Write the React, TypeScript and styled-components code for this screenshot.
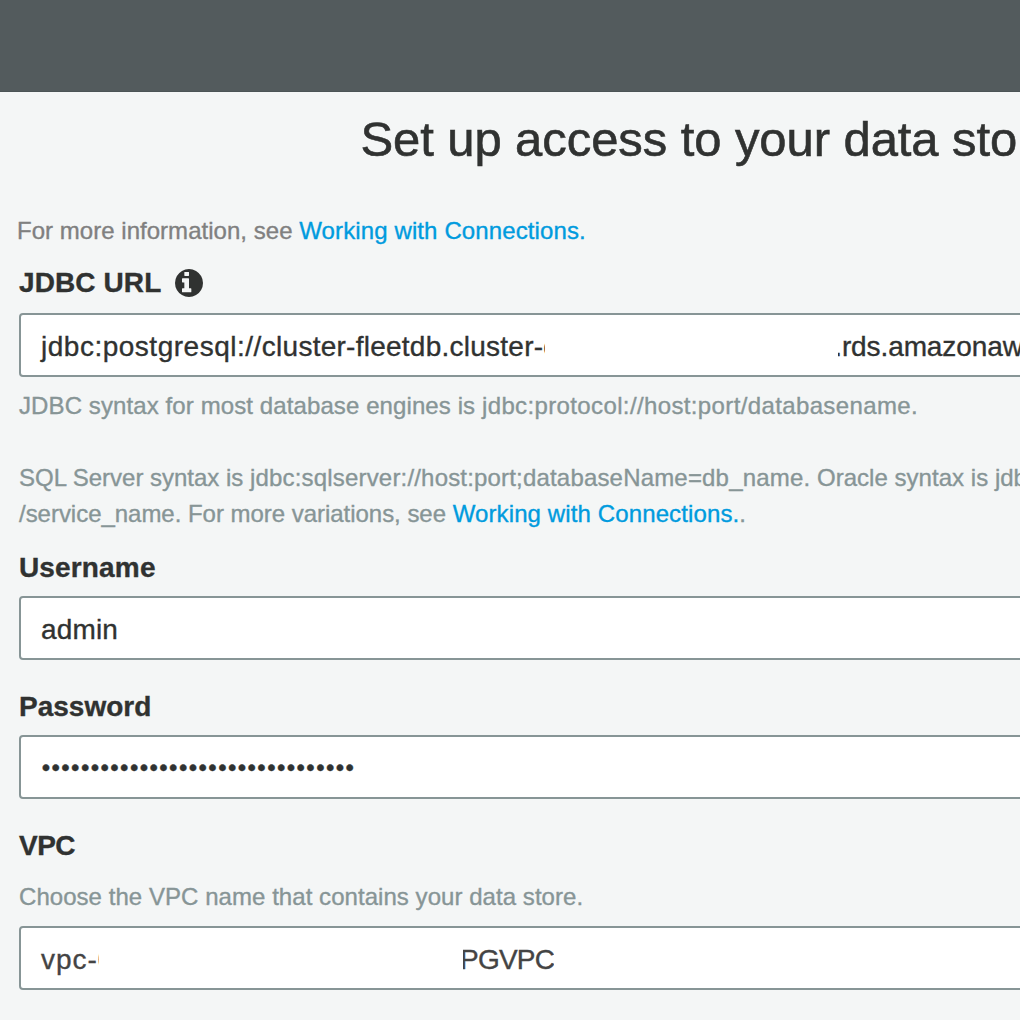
import React from 'react';
import styled, { createGlobalStyle } from 'styled-components';

const GlobalStyle = createGlobalStyle`
  html, body {
    margin: 0;
    background: #f4f6f6;
    overflow: hidden;
  }
  * { box-sizing: border-box; }
`;

const Page = styled.div`
  width: 100vw;
  height: 100vh;
  overflow: hidden;
  background: #f4f6f6;
  color: #303231;
  font-family: "Liberation Sans", Arial, Helvetica, sans-serif;
  -webkit-text-stroke: 0.35px currentColor;
`;

const TopBar = styled.header`
  height: 92px;
  background: #535b5d;
  border-bottom: 1px solid #4c5456;
`;

const Dialog = styled.main`
  display: flex;
  flex-direction: column;
  width: 1422px;
  padding: 17px 0 0 19px;
`;

const Title = styled.h1`
  margin: 0 0 43px -20px;
  font-size: 49px;
  line-height: 60px;
  font-weight: 400;
  letter-spacing: -0.08px;
  text-align: center;
  white-space: nowrap;
  -webkit-text-stroke-width: 0.6px;
`;

const Intro = styled.p`
  margin: 0 0 15px -2px;
  padding-top: 1px;
  font-size: 24px;
  line-height: 36px;
  letter-spacing: 0.03px;
  color: #808080;
  white-space: nowrap;
`;

const Link = styled.a`
  color: #009bde;
  letter-spacing: 0.12px;
  text-decoration: none;
`;

const Field = styled.section<{ $gap: number }>`
  display: flex;
  flex-direction: column;
  margin-bottom: ${({ $gap }) => $gap}px;
`;

const Label = styled.label<{ $gap?: number; $tracking?: number }>`
  display: flex;
  align-items: flex-start;
  height: 36px;
  margin-bottom: ${({ $gap = 11 }) => $gap}px;
  padding-top: 1px;
  font-size: 28px;
  line-height: 36px;
  font-weight: 700;
  letter-spacing: ${({ $tracking = 0 }) => $tracking}px;
`;

const InfoIcon = styled.svg`
  flex: none;
  width: 28px;
  height: 28px;
  margin: 4px 0 0 13.7px;
  fill: #303231;
  stroke: none;
`;

const InputBox = styled.div<{ $soft?: boolean }>`
  display: flex;
  align-items: center;
  height: 64px;
  padding: 4px 20px 0 18px;
  border: 2px solid #879596;
  border-radius: 4px;
  background: #fff;
  color: ${({ $soft }) => ($soft ? '#444444' : '#303231')};
`;

const Value = styled.span<{ $width?: number; $tracking?: number }>`
  flex: none;
  width: ${({ $width }) => ($width ? `${$width}px` : 'auto')};
  padding-left: 2px;
  font-size: 28px;
  line-height: 36px;
  letter-spacing: ${({ $tracking = 0 }) => $tracking}px;
  white-space: nowrap;
  overflow: hidden;
`;

const Tail = styled(Value)<{ $gap: number; $shift: number }>`
  margin-left: ${({ $gap }) => $gap}px;
  padding-left: 0;
  text-indent: ${({ $shift }) => $shift}px;
`;

const Dots = styled.span`
  margin-bottom: 2px;
  padding-left: 2.7px;
  font-size: 24px;
  line-height: 36px;
  letter-spacing: 1.4px;
`;

const Help = styled.p<{ $before?: number; $after?: number }>`
  margin: ${({ $before = 0 }) => $before}px 0 ${({ $after = 0 }) => $after}px;
  font-size: 24px;
  line-height: 36px;
  color: #879596;
  white-space: nowrap;
`;

const Line = styled.span`
  display: block;
  min-height: 36px;
`;

const Run = styled.span<{ $tracking: number }>`
  letter-spacing: ${({ $tracking }) => $tracking}px;
`;

export default function App() {
  return (
    <Page>
      <GlobalStyle />
      <TopBar />
      <Dialog>
        <Title>Set up access to your data store</Title>
        <Intro>
          For more information, see <Link>Working with Connections.</Link>
        </Intro>

        <Field $gap={17}>
          <Label $gap={13} $tracking={0.1}>
            JDBC URL
            <InfoIcon viewBox="128 128 1536 1536" aria-hidden="true">
              <path d="M1024 1376v-160q0-14-9-23t-23-9h-96v-512q0-14-9-23t-23-9h-320q-14 0-23 9t-9 23v160q0 14 9 23t23 9h96v320h-96q-14 0-23 9t-9 23v160q0 14 9 23t23 9h448q14 0 23-9t9-23zM896 480v-160q0-14-9-23t-23-9h-192q-14 0-23 9t-9 23v160q0 14 9 23t23 9h192q14 0 23-9t9-23zM1664 896q0 209-103 385.500t-279.500 279.500-385.500 103-385.500-103-279.500-279.500-103-385.500 103-385.500 279.500-279.500 385.500-103 385.500 103 279.500 279.500 103 385.500z" />
            </InfoIcon>
          </Label>
          <InputBox>
            <Value $width={506}>
              <Run $tracking={0.51}>jdbc:postgresql://</Run>
              <Run $tracking={0.25}>cluster-fleetdb.cluster-c</Run>
            </Value>
            <Tail $gap={293} $shift={-3.8} $tracking={-0.1}>
              .rds.amazonaws.com
            </Tail>
          </InputBox>
          <Help $before={11}>
            <Line>
              <Run $tracking={0.1}>JDBC syntax for most database engines is </Run>
              <Run $tracking={0.37}>jdbc:protocol://host:port/databasename.</Run>
            </Line>
            <Line />
            <Line>
              <Run $tracking={-0.01}>SQL Server syntax is </Run>
              <Run $tracking={0.18}>jdbc:sqlserver://host:port;databaseName=db_name.</Run>
              <Run $tracking={0.03}> Oracle syntax is jdbc:oracle</Run>
            </Line>
            <Line>
              <Run $tracking={-0.03}>/service_name. For more variations, see </Run>
              <Link>Working with Connections.</Link>.
            </Line>
          </Help>
        </Field>

        <Field $gap={28}>
          <Label $tracking={0.15}>Username</Label>
          <InputBox>
            <Value $tracking={0.15}>admin</Value>
          </InputBox>
        </Field>

        <Field $gap={28}>
          <Label>Password</Label>
          <InputBox>
            <Dots>{'•'.repeat(32)}</Dots>
          </InputBox>
        </Field>

        <Field $gap={0}>
          <Label $gap={16} $tracking={-0.5}>VPC</Label>
          <Help $after={11}>
            <Line>
              <Run $tracking={0.05}>Choose the VPC name that contains your data store.</Run>
            </Line>
          </Help>
          <InputBox $soft>
            <Value $width={60} $tracking={0.97}>vpc-0</Value>
            <Tail $gap={364} $shift={-2.9} $tracking={-0.8}>PGVPC</Tail>
          </InputBox>
        </Field>
      </Dialog>
    </Page>
  );
}
